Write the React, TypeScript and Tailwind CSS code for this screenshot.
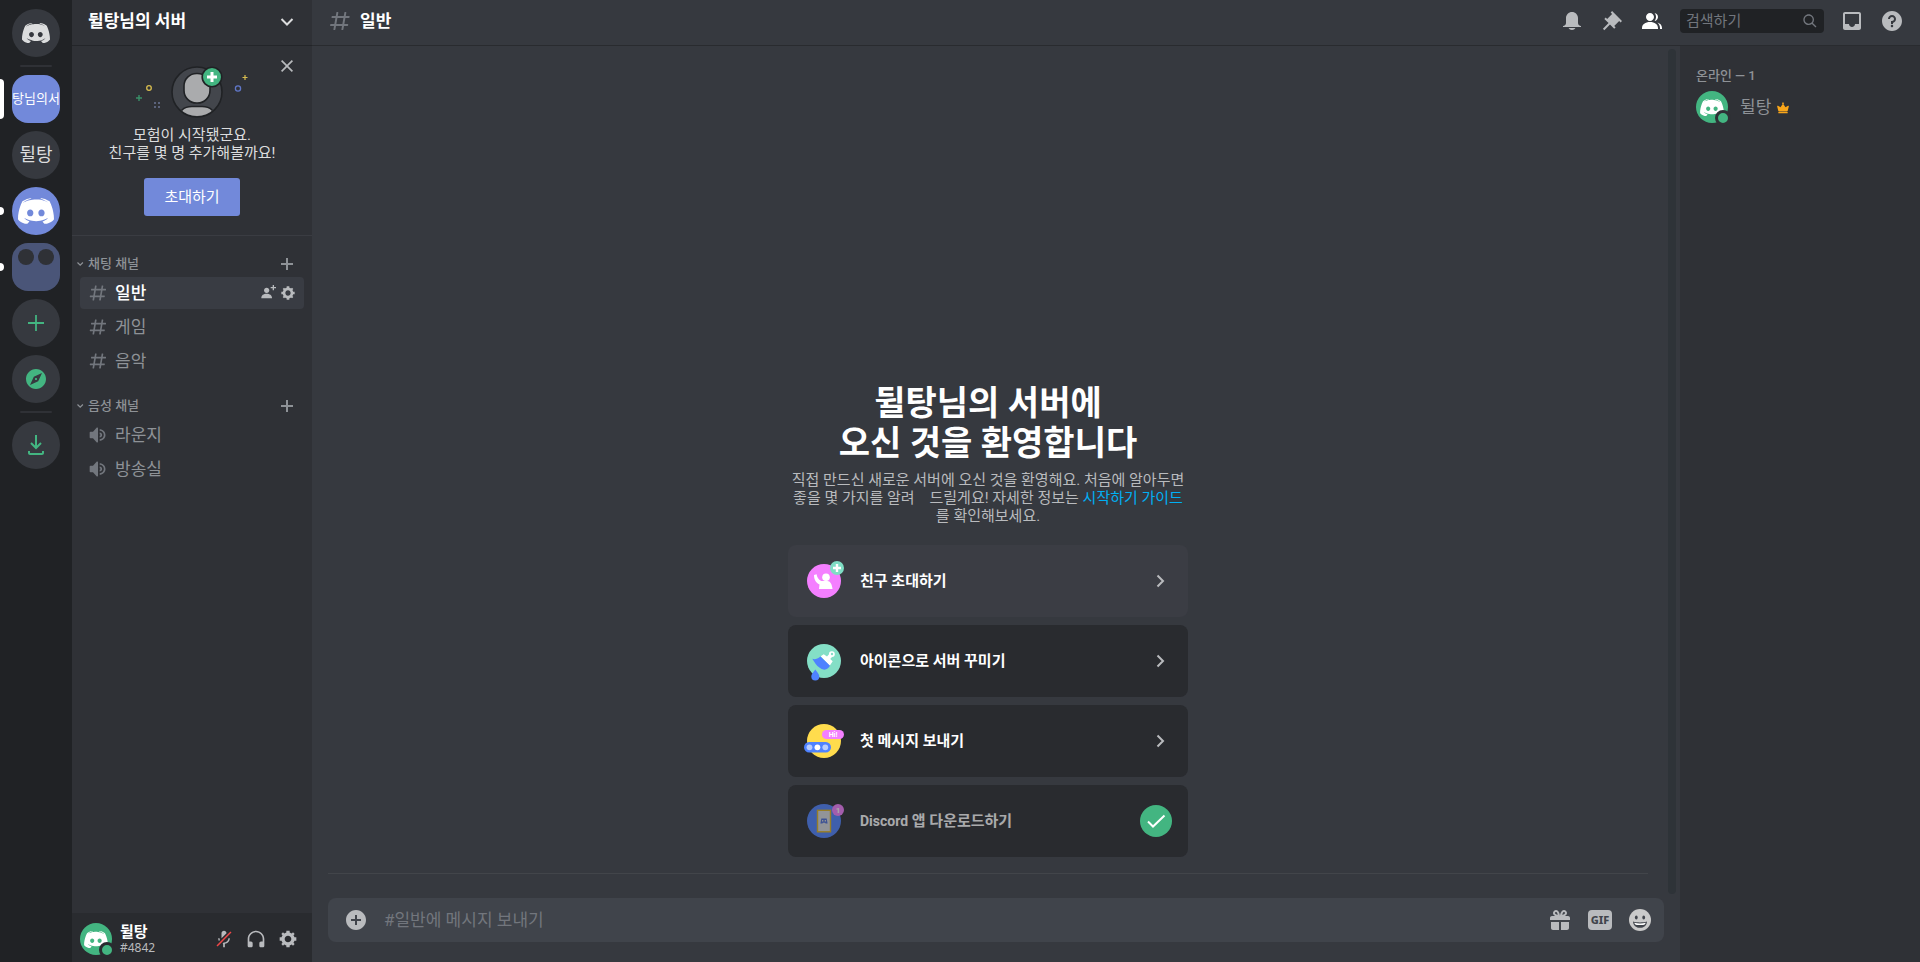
import type { ReactNode } from 'react';

const paths = {
  hash: 'M5.88657 21C5.57547 21 5.3399 20.7189 5.39427 20.4126L6.00001 17H2.59511C2.28449 17 2.04905 16.7198 2.10259 16.4138L2.27759 15.4138C2.31946 15.1746 2.52722 15 2.77011 15H6.35001L7.41001 9H4.00511C3.69449 9 3.45905 8.71977 3.51259 8.41381L3.68759 7.41381C3.72946 7.17456 3.93722 7 4.18011 7H7.76001L8.39677 3.41262C8.43914 3.17391 8.64664 3 8.88907 3H9.87344C10.1845 3 10.4201 3.28107 10.3657 3.58738L9.76001 7H15.76L16.3968 3.41262C16.4391 3.17391 16.6466 3 16.8891 3H17.8734C18.1845 3 18.4201 3.28107 18.3657 3.58738L17.76 7H21.1649C21.4755 7 21.711 7.28023 21.6574 7.58619L21.4824 8.58619C21.4406 8.82544 21.2328 9 20.9899 9H17.41L16.35 15H19.7549C20.0655 15 20.301 15.2802 20.2474 15.5862L20.0724 16.5862C20.0306 16.8254 19.8228 17 19.5799 17H16L15.3632 20.5874C15.3209 20.8261 15.1134 21 14.8709 21H13.8866C13.5755 21 13.3399 20.7189 13.3943 20.4126L14 17H8.00001L7.36325 20.5874C7.32088 20.8261 7.11337 21 6.87094 21H5.88657ZM9.41045 9L8.35045 15H14.3504L15.4104 9H9.41045Z',
  speaker: 'M11.383 3.07904C11.009 2.92504 10.579 3.01004 10.293 3.29604L6 8.00204H3C2.45 8.00204 2 8.45304 2 9.00204V15.002C2 15.552 2.45 16.002 3 16.002H6L10.293 20.71C10.579 20.996 11.009 21.082 11.383 20.927C11.757 20.772 12 20.407 12 20.002V4.00204C12 3.59904 11.757 3.23204 11.383 3.07904ZM14 5.00195V7.00195C16.757 7.00195 19 9.24595 19 12.002C19 14.759 16.757 17.002 14 17.002V19.002C17.86 19.002 21 15.863 21 12.002C21 8.14295 17.86 5.00195 14 5.00195ZM14 9.00195C15.654 9.00195 17 10.349 17 12.002C17 13.657 15.654 15.002 14 15.002V13.002C14.551 13.002 15 12.553 15 12.002C15 11.451 14.551 11.002 14 11.002V9.00195Z',
  bell: 'M18 9V14C18 15.657 19.344 17 21 17V18H3V17C4.656 17 6 15.657 6 14V9C6 5.686 8.686 3 12 3C15.314 3 18 5.686 18 9ZM11.9999 21C10.5239 21 9.24793 20.1939 8.55493 19H15.4449C14.7519 20.1939 13.4759 21 11.9999 21Z',
  pin: 'M22 12L12.101 2.10101L10.686 3.51401L12.101 4.92901L7.15096 9.87801V9.88001L5.73596 8.46501L4.32196 9.88001L8.56496 14.122L2.90796 19.778L4.32196 21.192L9.97896 15.536L14.222 19.778L15.636 18.364L14.222 16.95L19.171 12H19.172L20.586 13.414L22 12Z',
  members: 'M14 8.00598C14 10.211 12.206 12.006 10 12.006C7.795 12.006 6 10.211 6 8.00598C6 5.80098 7.794 4.00598 10 4.00598C12.206 4.00598 14 5.80098 14 8.00598ZM2 19.006C2 15.473 5.29 13.006 10 13.006C14.711 13.006 18 15.473 18 19.006V20.006H2V19.006ZM20.0001 20.006H22.0001V19.006C22.0001 16.4433 20.2697 14.4415 17.5213 13.5352C19.0621 14.9127 20.0001 16.8059 20.0001 19.006V20.006ZM14.8834 11.9077C16.6657 11.5044 18.0001 9.9077 18.0001 8.00598C18.0001 5.96916 16.4693 4.28218 14.4971 4.0367C15.4322 5.09511 16.0001 6.48524 16.0001 8.00598C16.0001 9.44888 15.4889 10.7742 14.6378 11.8102C14.7203 11.8418 14.8022 11.8743 14.8834 11.9077Z',
  inbox: 'M19 3H4.99C3.88 3 3.01 3.89 3.01 5L3 19C3 20.1 3.88 21 4.99 21H19C20.1 21 21 20.1 21 19V5C21 3.89 20.1 3 19 3ZM19 15H15C15 16.66 13.65 18 12 18C10.35 18 9 16.66 9 15H4.99V5H19V15Z',
  help: 'M12 2C6.486 2 2 6.487 2 12C2 17.515 6.486 22 12 22C17.514 22 22 17.515 22 12C22 6.487 17.514 2 12 2ZM12 18.25C11.31 18.25 10.75 17.691 10.75 17C10.75 16.31 11.31 15.75 12 15.75C12.69 15.75 13.25 16.31 13.25 17C13.25 17.691 12.69 18.25 12 18.25ZM13 13.875V15H11V12H12C13.104 12 14 11.103 14 10C14 8.896 13.104 8 12 8C10.896 8 10 8.896 10 10H8C8 7.795 9.795 6 12 6C14.205 6 16 7.795 16 10C16 11.861 14.723 13.429 13 13.875Z',
  search: 'M21.707 20.293L16.314 14.9C17.403 13.504 18 11.799 18 10C18 7.863 17.167 5.854 15.656 4.344C14.146 2.832 12.137 2 10 2C7.863 2 5.854 2.832 4.344 4.344C2.833 5.854 2 7.863 2 10C2 12.137 2.833 14.146 4.344 15.656C5.854 17.168 7.863 18 10 18C11.799 18 13.504 17.404 14.9 16.314L20.293 21.706L21.707 20.293ZM10 16C8.397 16 6.891 15.376 5.758 14.243C4.624 13.11 4 11.603 4 10C4 8.398 4.624 6.891 5.758 5.758C6.891 4.624 8.397 4 10 4C11.603 4 13.109 4.624 14.242 5.758C15.376 6.891 16 8.398 16 10C16 11.603 15.376 13.11 14.242 14.243C13.109 15.376 11.603 16 10 16Z',
  gear: 'M19.738 10H22V14H19.739C19.498 14.931 19.1 15.798 18.565 16.564L20 18L18 20L16.565 18.564C15.797 19.099 14.932 19.498 14 19.738V22H10V19.738C9.069 19.498 8.203 19.099 7.436 18.564L6 20L4 18L5.436 16.564C4.901 15.799 4.502 14.932 4.262 14H2V10H4.262C4.502 9.068 4.9 8.202 5.436 7.436L4 6L6 4L7.436 5.436C8.202 4.9 9.068 4.502 10 4.262V2H14V4.261C14.932 4.502 15.797 4.9 16.565 5.435L18 3.999L20 5.999L18.564 7.436C19.099 8.202 19.498 9.069 19.738 10ZM12 16C14.2091 16 16 14.2091 16 12C16 9.79086 14.2091 8 12 8C9.79086 8 8 9.79086 8 12C8 14.2091 9.79086 16 12 16Z',
  invite: 'M21 3H24V5H21V8H19V5H16V3H19V0H21V3ZM10 12C12.205 12 14 10.205 14 8C14 5.795 12.205 4 10 4C7.795 4 6 5.795 6 8C6 10.205 7.795 12 10 12ZM10 13C5.289 13 2 15.467 2 19V20H18V19C18 15.467 14.711 13 10 13Z',
  headphones: 'M12 2.00305C6.486 2.00305 2 6.48805 2 12.0031V20.0031C2 21.1071 2.895 22.0031 4 22.0031H6C7.104 22.0031 8 21.1071 8 20.0031V17.0031C8 15.8991 7.104 15.0031 6 15.0031H4V12.0031C4 7.59105 7.589 4.00305 12 4.00305C16.411 4.00305 20 7.59105 20 12.0031V15.0031H18C16.896 15.0031 16 15.8991 16 17.0031V20.0031C16 21.1071 16.896 22.0031 18 22.0031H20C21.104 22.0031 22 21.1071 22 20.0031V12.0031C22 6.48805 17.514 2.00305 12 2.00305Z',
  mic: 'M6.7 11H5C5 12.19 5.34 13.3 5.9 14.28L7.13 13.05C6.86 12.43 6.7 11.74 6.7 11ZM9.01 11.085C9.015 11.1125 9.02 11.14 9.02 11.17L15 5.18V5C15 3.34 13.66 2 12 2C10.34 2 9 3.34 9 5V11C9 11.03 9.005 11.0575 9.01 11.085ZM11.7237 16.0927L10.9632 16.8531L10.2533 17.5688C10.4978 17.633 10.747 17.6839 11 17.72V22H13V17.72C16.28 17.23 19 14.41 19 11H17.3C17.3 14 14.76 16.1 12 16.1C11.9076 16.1 11.8155 16.0975 11.7237 16.0927Z',
  slash: 'M21 4.27L19.73 3L3 19.73L4.27 21L8.46 16.82L9.69 15.58L11.35 13.92L14.99 10.28L21 4.27Z',
  compass: 'M12 10.9C11.39 10.9 10.9 11.39 10.9 12C10.9 12.61 11.39 13.1 12 13.1C12.61 13.1 13.1 12.61 13.1 12C13.1 11.39 12.61 10.9 12 10.9ZM12 2C6.48 2 2 6.48 2 12C2 17.52 6.48 22 12 22C17.52 22 22 17.52 22 12C22 6.48 17.52 2 12 2ZM14.19 14.19L6 18L9.81 9.81L18 6L14.19 14.19Z',
  download: 'M16.293 9.293L17.707 10.707L12 16.414L6.29297 10.707L7.70697 9.293L11 12.586V2H13V12.586L16.293 9.293ZM18 20V18H20V20C20 21.102 19.104 22 18 22H6C4.896 22 4 21.102 4 20V18H6V20H18Z',
  plus: 'M20 11.1111H12.8889V4H11.1111V11.1111H4V12.8889H11.1111V20H12.8889V12.8889H20V11.1111Z',
  plusBold: 'M20 10.6667H13.3333V4H10.6667V10.6667H4V13.3333H10.6667V20H13.3333V13.3333H20V10.6667Z',
  close: 'M18.4 4L12 10.4L5.6 4L4 5.6L10.4 12L4 18.4L5.6 20L12 13.6L18.4 20L20 18.4L13.6 12L20 5.6L18.4 4Z',
  attach: 'M12 2.00098C6.486 2.00098 2 6.48698 2 12.001C2 17.515 6.486 22.001 12 22.001C17.514 22.001 22 17.515 22 12.001C22 6.48698 17.514 2.00098 12 2.00098ZM17 13.001H13V17.001H11V13.001H7V11.001H11V7.00098H13V11.001H17V13.001Z',
  gift: 'M16.886 7.999H20C21.104 7.999 22 8.896 22 9.999V11.999H2V9.999C2 8.896 2.897 7.999 4 7.999H7.114C6.663 7.764 6.236 7.477 5.879 7.121C4.709 5.951 4.709 4.048 5.879 2.879C7.012 1.746 8.986 1.746 10.121 2.877C11.758 4.514 11.979 7.595 11.998 7.941C11.9991 7.9525 11.9966 7.96279 11.9941 7.97304C11.992 7.98151 11.99 7.98995 11.99 7.999H12.01C12.01 7.98986 12.0079 7.98134 12.0058 7.97281C12.0033 7.96259 12.0009 7.95236 12.002 7.941C12.022 7.595 12.242 4.515 13.879 2.878C15.014 1.745 16.986 1.746 18.121 2.877C19.29 4.049 19.29 5.952 18.121 7.121C17.764 7.477 17.337 7.764 16.886 7.999ZM7.293 5.707C6.903 5.316 6.903 4.682 7.293 4.292C7.481 4.103 7.732 4 8 4C8.268 4 8.519 4.103 8.707 4.292C9.297 4.882 9.641 5.94 9.825 6.822C8.945 6.639 7.879 6.293 7.293 5.707ZM14.174 6.824C14.359 5.941 14.702 4.883 15.293 4.293C15.481 4.103 15.732 4 16 4C16.268 4 16.519 4.103 16.706 4.291C17.096 4.682 17.097 5.316 16.707 5.707C16.116 6.298 15.057 6.642 14.174 6.824ZM3 13.999H11V21.999H5C3.896 21.999 3 21.103 3 19.999V13.999ZM13 13.999H21V19.999C21 21.103 20.104 21.999 19 21.999H13V13.999Z',
  crown: 'M13.6572 5.42868C13.8879 5.29002 14.1806 5.30402 14.3973 5.46468C14.6133 5.62602 14.7119 5.90068 14.6473 6.16202L13.3139 11.4954C13.2393 11.7927 12.9726 12.0007 12.6666 12.0007H3.33325C3.02725 12.0007 2.76058 11.792 2.68592 11.4954L1.35258 6.16202C1.28792 5.90068 1.38658 5.62602 1.60258 5.46468C1.81992 5.30468 2.11192 5.29068 2.34325 5.42868L5.13192 7.10202L7.44592 3.63068C7.46173 3.60697 7.48377 3.5913 7.50588 3.57559C7.5192 3.56612 7.53255 3.55663 7.54458 3.54535L6.90258 2.90268C6.77325 2.77335 6.77325 2.56068 6.90258 2.43135L7.76458 1.56935C7.89392 1.44002 8.10658 1.44002 8.23592 1.56935L9.09792 2.43135C9.22725 2.56068 9.22725 2.77335 9.09792 2.90268L8.45592 3.54535C8.46794 3.55686 8.48154 3.56651 8.49516 3.57618C8.51703 3.5917 8.53897 3.60727 8.55458 3.63068L10.8686 7.10202L13.6572 5.42868ZM2.66667 12.6673H13.3333V14.0007H2.66667V12.6673Z',
  logo: 'M20.6644 20C20.6644 20 19.8014 18.9762 19.0822 18.0714C22.2226 17.1905 23.4212 15.2381 23.4212 15.2381C22.4384 15.881 21.5034 16.3334 20.6644 16.6429C19.4658 17.1429 18.3151 17.4762 17.1884 17.6667C14.887 18.0953 12.7774 17.9762 10.9795 17.6429C9.61301 17.381 8.43836 17 7.45548 16.6191C6.90411 16.4048 6.30479 16.1429 5.70548 15.8096C5.63356 15.7619 5.56164 15.7381 5.48973 15.6905C5.44178 15.6667 5.41781 15.6429 5.39384 15.6191C4.96233 15.381 4.7226 15.2143 4.7226 15.2143C4.7226 15.2143 5.87329 17.1191 8.91781 18.0238C8.19863 18.9286 7.3116 20 7.3116 20C2.0137 19.8333 0 16.381 0 16.381C0 8.7144 3.45205 2.50017 3.45205 2.50017C6.90411 -0.07123 10.1884 0.000197861 10.1884 0.000197861L10.4281 0.285909C6.11301 1.52399 4.12329 3.40493 4.12329 3.40493C4.12329 3.40493 4.65068 3.11921 5.53767 2.71446C8.10274 1.59542 10.1404 1.2859 10.9795 1.21447C11.1233 1.19066 11.2432 1.16685 11.387 1.16685C12.8493 0.976379 14.5034 0.92876 16.2295 1.11923C18.5068 1.38114 20.9521 2.0478 23.4452 3.40493C23.4452 3.40493 21.5514 1.61923 17.476 0.381146L17.8116 0.000197861C17.8116 0.000197861 21.0959 -0.07123 24.5479 2.50017C24.5479 2.50017 28 8.7144 28 16.381C28 16.381 25.9623 19.8333 20.6644 20ZM9.51712 8.88106C8.15068 8.88106 7.07192 10.0715 7.07192 11.5239C7.07192 12.9763 8.17466 14.1667 9.51712 14.1667C10.8836 14.1667 11.9623 12.9763 11.9623 11.5239C11.9863 10.0715 10.8836 8.88106 9.51712 8.88106ZM18.2671 8.88106C16.9007 8.88106 15.8219 10.0715 15.8219 11.5239C15.8219 12.9763 16.9247 14.1667 18.2671 14.1667C19.6336 14.1667 20.7123 12.9763 20.7123 11.5239C20.7123 10.0715 19.6336 8.88106 18.2671 8.88106Z'
};

type IconName = keyof typeof paths;

function Icon({ name, className = 'w-6 h-6', viewBox = '0 0 24 24' }: { name: IconName; className?: string; viewBox?: string }) {
  return (
    <svg viewBox={viewBox} className={`shrink-0 ${className}`} fill="currentColor" fillRule="evenodd" aria-hidden="true">
      <path d={paths[name]} />
    </svg>
  );
}

function Logo({ className }: { className: string }) {
  return <Icon name="logo" viewBox="0 0 28 20" className={className} />;
}

function Avatar({ ring }: { ring: string }) {
  return (
    <div className="relative w-8 h-8 shrink-0 rounded-full bg-[#43b581] flex items-center justify-center">
      <Logo className="w-6 h-[17px] text-white" />
      <span className={`absolute -right-[3px] -bottom-[3px] w-4 h-4 rounded-full border-[3px] bg-[#43b581] ${ring}`} />
    </div>
  );
}

function Guild({ label, className, marker, children }: { label: string; className: string; marker?: string; children: ReactNode }) {
  return (
    <li className="relative flex w-full justify-center">
      {marker && <span className={`absolute left-0 top-1/2 -translate-y-1/2 w-1 rounded-r bg-white ${marker}`} />}
      <button aria-label={label} className={`w-12 h-12 flex items-center justify-center overflow-hidden ${className}`}>
        {children}
      </button>
    </li>
  );
}

function GuildBar() {
  return (
    <nav className="w-[72px] shrink-0 bg-[#202225] pt-[9px]">
      <ul className="flex flex-col items-center gap-2">
        <Guild label="홈" className="rounded-full bg-[#36393f] text-[#dcddde]">
          <Logo className="w-7 h-5" />
        </Guild>
        <li className="w-8 h-0.5 rounded bg-[#2f3136]" />
        <Guild label="뒬탕님의 서버" marker="h-10" className="rounded-2xl bg-[#7289da] text-white text-[13px] whitespace-nowrap">
          탕님의서
        </Guild>
        <Guild label="뒬탕" className="rounded-full bg-[#36393f] text-[#dcddde] text-lg">
          뒬탕
        </Guild>
        <Guild label="Discord" marker="h-2" className="rounded-full bg-[#7289da] text-white">
          <Logo className="w-9 h-[26px]" />
        </Guild>
        <Guild label="서버 폴더" marker="h-2" className="rounded-2xl bg-[#4a5578]">
          <span className="flex gap-1 self-start pt-1.5">
            <span className="w-4 h-4 rounded-full bg-[#2f3136]" />
            <span className="w-4 h-4 rounded-full bg-[#2f3136]" />
          </span>
        </Guild>
        <Guild label="서버 추가하기" className="rounded-full bg-[#36393f] text-[#43b581]">
          <Icon name="plus" />
        </Guild>
        <Guild label="공개 서버 살펴보기" className="rounded-full bg-[#36393f] text-[#43b581]">
          <Icon name="compass" />
        </Guild>
        <li className="w-8 h-0.5 rounded bg-[#2f3136]" />
        <Guild label="앱 다운로드" className="rounded-full bg-[#36393f] text-[#43b581]">
          <Icon name="download" />
        </Guild>
      </ul>
    </nav>
  );
}

function InviteArt() {
  return (
    <svg viewBox="0 0 128 52" className="w-32 h-[52px]" fill="none" aria-hidden="true">
      <defs>
        <clipPath id="badge">
          <circle cx="69" cy="26" r="24" />
        </clipPath>
      </defs>
      <circle cx="69" cy="26" r="25" fill="#43464c" stroke="#202225" strokeWidth="1.6" />
      <path clipPath="url(#badge)" d="M54 44c3-3 6-3.500 10-3.500h10c4 0 7 .5 10 3.500l3 8H51z" fill="#aaabad" stroke="#202225" strokeWidth="1.600" />
      <rect x="56" y="7.500" width="26" height="29.500" rx="12.500" fill="#aaabad" stroke="#202225" strokeWidth="1.600" />
      <circle cx="84" cy="11" r="9.800" fill="#43b581" stroke="#202225" strokeWidth="1.600" />
      <path d="M84 6v10M79 11h10" stroke="#fff" strokeWidth="3" />
      <circle cx="21" cy="22" r="2.300" stroke="#d8bd4f" strokeWidth="1.300" />
      <circle cx="110" cy="22.500" r="2.600" stroke="#6077c8" strokeWidth="1.300" />
      <path d="M117 9v5M114.500 11.500h5" stroke="#d8bd4f" strokeWidth="1.200" />
      <path d="M11 29v6M8 32h6" stroke="#3a9068" strokeWidth="1.400" />
      <path d="M26 37h2M30 37h2M26 41h2M30 41h2" stroke="#6b7494" strokeWidth="1.700" />
    </svg>
  );
}

const categories: { name: string; icon: IconName; channels: string[] }[] = [
  { name: '채팅 채널', icon: 'hash', channels: ['일반', '게임', '음악'] },
  { name: '음성 채널', icon: 'speaker', channels: ['라운지', '방송실'] }
];

function Sidebar() {
  return (
    <aside className="w-60 shrink-0 bg-[#2f3136] flex flex-col">
      <button className="h-[46px] border-b border-[#232529] pl-4 pr-4 pb-1 flex items-center justify-between text-white">
        <span className="text-[17px] font-bold leading-6">뒬탕님의 서버</span>
        <svg viewBox="0 0 18 18" className="w-[18px] h-[18px]" fill="none" stroke="#dcddde" strokeWidth="2" aria-hidden="true">
          <path d="M3.500 7L9 12.500 14.500 7" />
        </svg>
      </button>

      <section className="relative border-b border-[#3a3c42] pt-5 pb-[19px] flex flex-col items-center">
        <button aria-label="닫기" className="absolute right-4 top-[11px] text-[#b9bbbe]">
          <Icon name="close" className="w-[18px] h-[18px]" />
        </button>
        <InviteArt />
        <p className="mt-2 text-center text-[15px] leading-[18px] text-[#dcddde]">
          모험이 시작됐군요.
          <br />
          친구를 몇 명 추가해볼까요!
        </p>
        <button className="mt-4 w-24 h-[38px] rounded-[3px] bg-[#7289da] text-white text-[15px]">초대하기</button>
      </section>

      <div className="flex-1">
        {categories.map((category) => (
          <section key={category.name} className="pt-4">
            <div className="h-6 pl-1 pr-4 flex items-center text-[#8e9297]">
              <svg viewBox="0 0 8 8" className="w-2 h-2" fill="none" stroke="currentColor" strokeWidth="1.200" aria-hidden="true">
                <path d="M1.500 2.500l2.700 2.700 2.700-2.700" />
              </svg>
              <h2 className="ml-1 flex-1 text-[13px] leading-4 font-medium">{category.name}</h2>
              <button aria-label={`${category.name} 만들기`}>
                <Icon name="plusBold" className="w-[18px] h-[18px]" />
              </button>
            </div>
            <ul>
              {category.channels.map((channel) => {
                const active = channel === '일반';
                return (
                  <li key={channel} className="px-2 py-px">
                    <div className={`h-8 px-2 rounded flex items-center ${active ? 'bg-[#393c43]' : ''}`}>
                      <a href={`#${channel}`} className="flex flex-1 items-center gap-[7px]">
                        <Icon name={category.icon} className="w-5 h-5 text-[#72767d]" />
                        <span className={`text-[17px] leading-5 ${active ? 'text-white font-medium' : 'text-[#8e9297]'}`}>{channel}</span>
                      </a>
                      {active && (
                        <span className="flex gap-1 text-[#b9bbbe]">
                          <button aria-label="초대 코드 만들기">
                            <Icon name="invite" className="w-4 h-4" />
                          </button>
                          <button aria-label="채널 편집">
                            <Icon name="gear" className="w-4 h-4" />
                          </button>
                        </span>
                      )}
                    </div>
                  </li>
                );
              })}
            </ul>
          </section>
        ))}
      </div>

      <footer className="h-[49px] bg-[#292b2f] px-2 pt-[3px] flex items-center text-[#b9bbbe]">
        <Avatar ring="border-[#292b2f]" />
        <div className="ml-2 flex-1">
          <div className="text-[15px] leading-[18px] font-bold text-white">뒬탕</div>
          <div className="font-['Noto_Sans',sans-serif] text-xs leading-[14px]">#4842</div>
        </div>
        <button aria-label="마이크" className="w-8 h-8 flex items-center justify-center">
          <svg viewBox="0 0 24 24" className="w-5 h-5" fill="currentColor" aria-hidden="true">
            <path d={paths.mic} />
            <path d={paths.slash} fill="#f04747" />
          </svg>
        </button>
        <button aria-label="헤드셋" className="w-8 h-8 flex items-center justify-center">
          <Icon name="headphones" className="w-5 h-5" />
        </button>
        <button aria-label="사용자 설정" className="w-8 h-8 flex items-center justify-center">
          <Icon name="gear" className="w-5 h-5" />
        </button>
      </footer>
    </aside>
  );
}

function FriendIcon() {
  return (
    <>
      <circle cx="20" cy="20" r="17" fill="#f47fff" />
      <circle cx="22" cy="16.300" r="3.800" fill="#fff" />
      <path d="M10 14l2.600-.8c.4 3 1.600 5 4.600 6.800h6.300c2.600 0 4.500 3 5 8H15l.5-4.500C11.500 21.500 10 18 10 14z" fill="#fff" />
      <circle cx="33" cy="7" r="7" fill="#7fdec5" />
      <path d="M33 3v8M29 7h8" stroke="#fff" strokeWidth="2.400" />
    </>
  );
}

function BrushIcon() {
  return (
    <>
      <circle cx="20" cy="20" r="17" fill="#84dfc6" />
      <path d="M16.700 15.300l3-2 3.300 2.200 2-2.200a2.900 2.900 0 1 1 3 2.700l-1.800 2.100 2.500 2.200-3 4.500z" fill="#fff" />
      <circle cx="28" cy="13" r="1.200" fill="#84dfc6" />
      <path d="M8.300 17.800c2.700.9 5 .2 8.100-2.300l9.600 9.300c-1.300 2.300-3 3.600-5.700 4-3.800-.8-6.500-3.200-8.600-5.800z" fill="#4e82ff" />
      <path d="M11.300 28.500c2.500 3.500 4 5 4 7a4 4 0 0 1-8 0c0-2 1.500-3.500 4-7z" fill="#4e82ff" />
    </>
  );
}

function MessageIcon() {
  return (
    <>
      <circle cx="20" cy="20" r="17" fill="#ffdc4d" />
      <rect x="18" y="9" width="22" height="9" rx="4.500" fill="#f47fff" />
      <text x="29" y="16" textAnchor="middle" fontSize="7" fontWeight="700" fill="#fff">
        Hi!
      </text>
      <rect x="0" y="21" width="27" height="10.500" rx="5.200" fill="#4e82ff" />
      <circle cx="5.500" cy="26.300" r="2.900" fill="#b8cdff" />
      <circle cx="13.400" cy="26.300" r="2.900" fill="#fff" />
      <circle cx="21.300" cy="26.300" r="2.900" fill="#b8cdff" />
    </>
  );
}

function PhoneIcon() {
  return (
    <>
      <circle cx="20" cy="20" r="17" fill="#4e82ff" />
      <rect x="13.500" y="9.300" width="13" height="21.500" fill="#d9dade" stroke="#e0b622" strokeWidth="1.400" />
      <path fillRule="evenodd" d="M17.300 17.500h5.400l.9 5h-2l-.5-.8h-2.200l-.5.8h-2zM18 19v1.500h1.300V19zM20.700 19v1.500H22V19z" fill="#4e6fd8" />
      <circle cx="34" cy="9" r="6" fill="#f47fff" />
      <text x="34" y="12" textAnchor="middle" fontSize="8" fontWeight="700" fill="#fff">
        1
      </text>
    </>
  );
}

const steps = [
  { title: '친구 초대하기', icon: FriendIcon, bg: 'bg-[#3b3d44]', done: false },
  { title: '아이콘으로 서버 꾸미기', icon: BrushIcon, bg: 'bg-[#292b2f]', done: false },
  { title: '첫 메시지 보내기', icon: MessageIcon, bg: 'bg-[#292b2f]', done: false },
  { brand: 'Discord', title: ' 앱 다운로드하기', icon: PhoneIcon, bg: 'bg-[#292b2f]', done: true }
];

function Welcome() {
  return (
    <div className="mx-auto w-full max-w-[400px]">
      <h1 className="text-center text-[34px] leading-10 font-bold text-white">
        뒬탕님의 서버에
        <br />
        오신 것을 환영합니다
      </h1>
      <p className="mt-2 text-center text-[15px] leading-[18px] text-[#b9bbbe] whitespace-nowrap">
        직접 만드신 새로운 서버에 오신 것을 환영해요. 처음에 알아두면
        <br />
        좋을 몇 가지를 알려&nbsp;&nbsp;&nbsp; 드릴게요! 자세한 정보는{' '}
        <a href="#guide" className="text-[#00aff4]">
          시작하기 가이드
        </a>
        <br />를 확인해보세요.
      </p>
      <ul className="mt-5 flex flex-col gap-2">
        {steps.map((step) => (
          <li key={step.title}>
            <button className={`w-full h-[72px] px-4 rounded-lg flex items-center gap-4 text-left text-white ${step.bg}`}>
              <svg viewBox="0 0 40 40" className={`w-10 h-10 overflow-visible ${step.done ? 'opacity-60' : ''}`} aria-hidden="true">
                <step.icon />
              </svg>
              <span className={`flex-1 text-[15px] leading-5 font-bold ${step.done ? 'opacity-60' : ''}`}>
                {step.brand && <span className="text-sm">{step.brand}</span>}
                {step.title}
              </span>
              {step.done ? (
                <span className="w-8 h-8 rounded-full bg-[#43b581] flex items-center justify-center">
                  <svg viewBox="0 0 24 24" className="w-6 h-6" fill="none" stroke="#fff" strokeWidth="2" aria-hidden="true">
                    <path d="M4 12.500l5 5L20.500 6.500" />
                  </svg>
                </span>
              ) : (
                <svg viewBox="0 0 24 24" className="w-6 h-6" fill="none" stroke="#b9bbbe" strokeWidth="2" aria-hidden="true">
                  <path d="M9.500 6.500L15 12l-5.500 5.500" />
                </svg>
              )}
            </button>
          </li>
        ))}
      </ul>
    </div>
  );
}

function TopBar() {
  return (
    <header className="h-[46px] shrink-0 border-b border-[#292b2f] px-4 pb-1 flex items-center gap-4 text-[#b9bbbe]">
      <div className="flex flex-1 items-center gap-2">
        <Icon name="hash" className="w-6 h-6 text-[#72767d]" />
        <h2 className="text-[17px] leading-6 font-bold text-white">일반</h2>
      </div>
      <button aria-label="알림 설정">
        <Icon name="bell" />
      </button>
      <button aria-label="고정된 메시지">
        <Icon name="pin" />
      </button>
      <button aria-label="멤버 목록" className="text-white">
        <Icon name="members" />
      </button>
      <label className="w-36 h-6 rounded bg-[#202225] px-1.5 flex items-center text-[#72767d]">
        <input aria-label="검색하기" placeholder="검색하기" className="min-w-0 flex-1 bg-transparent text-[15px] leading-5 outline-none placeholder:text-[#72767d]" />
        <Icon name="search" className="w-4 h-4" />
      </label>
      <button aria-label="받은 편지함">
        <Icon name="inbox" />
      </button>
      <button aria-label="도움말">
        <Icon name="help" />
      </button>
    </header>
  );
}

function Composer() {
  return (
    <form className="mx-4 mb-5 h-11 rounded-lg bg-[#40444b] pl-4 pr-3 flex items-center gap-4 text-[#b9bbbe]">
      <button type="button" aria-label="파일 첨부">
        <Icon name="attach" />
      </button>
      <input aria-label="메시지" placeholder="#일반에 메시지 보내기" className="min-w-0 flex-1 bg-transparent text-[17px] leading-6 outline-none placeholder:text-[#72767d]" />
      <button type="button" aria-label="선물하기">
        <Icon name="gift" />
      </button>
      <button type="button" className="w-6 h-5 rounded-sm bg-[#b9bbbe] text-[#40444b] font-['Noto_Sans',sans-serif] text-[11px] leading-5 font-extrabold">
        GIF
      </button>
      <button type="button" aria-label="이모티콘">
        <svg viewBox="0 0 24 24" className="w-6 h-6" aria-hidden="true">
          <circle cx="12" cy="12" r="11" fill="#cacaca" />
          <ellipse cx="8.300" cy="9.500" rx="1.400" ry="2.100" fill="#40444b" />
          <ellipse cx="15.700" cy="9.500" rx="1.400" ry="2.100" fill="#40444b" />
          <path d="M5 13.500c2 .6 4.500.9 7 .9s5-.3 7-.9c-.3 4-3 6.300-7 6.300s-6.700-2.300-7-6.300z" fill="#40444b" />
          <path d="M6.300 14.800c1.700.5 3.700.7 5.700.7s4-.2 5.700-.7c-.3 1.500-1.500 2.200-2.500 2.200H8.800c-1 0-2.200-.7-2.500-2.200z" fill="#fff" />
        </svg>
      </button>
    </form>
  );
}

export default function App() {
  return (
    <div className="h-screen flex overflow-hidden bg-[#36393f] font-['Roboto','Noto_Sans_CJK_KR',sans-serif]">
      <GuildBar />
      <Sidebar />
      <div className="min-w-0 flex-1 flex flex-col">
        <TopBar />
        <div className="min-h-0 flex-1 flex">
          <main className="min-w-0 flex-1 flex flex-col">
            <div className="min-h-0 flex-1 flex">
              <div className="flex-1 px-4 pb-6 flex flex-col justify-end">
                <Welcome />
                <hr className="mt-4 border-[#42454a]" />
              </div>
              <div className="w-4 pt-[3px] pb-1 flex justify-center">
                <div className="w-2 rounded bg-[#2e3338]" />
              </div>
            </div>
            <Composer />
          </main>
          <aside className="w-60 shrink-0 bg-[#2f3136] px-4 pt-5">
            <h2 className="text-[13px] leading-5 font-medium text-[#8e9297]">온라인 — 1</h2>
            <ul>
              <li className="h-[42px] flex items-center">
                <Avatar ring="border-[#2f3136]" />
                <span className="ml-3 text-[17px] leading-5 text-[#8e9297]">뒬탕</span>
                <Icon name="crown" viewBox="0 0 16 16" className="ml-[5px] mt-0.5 w-3.5 h-3.5 text-[#faa61a]" />
              </li>
            </ul>
          </aside>
        </div>
      </div>
    </div>
  );
}
